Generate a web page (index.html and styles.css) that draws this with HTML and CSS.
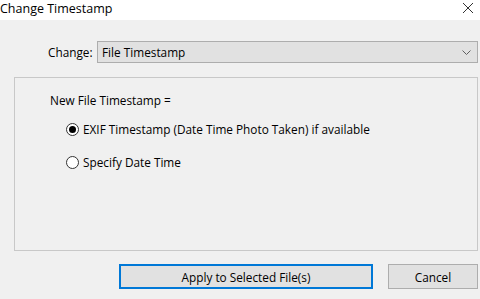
FILE: index.html
```html
<!DOCTYPE html>
<html lang="en">
<head>
    <meta charset="UTF-8">
    <title>Change Timestamp</title>
    <link rel="stylesheet" href="styles.css">
</head>
<body>
    <div class="dialog">
        <div class="title-bar">
            <span class="title">Change Timestamp</span>
            <svg class="close" width="12" height="12" viewBox="0 0 12 12">
                <path d="M1 1 L11 11 M11 1 L1 11" stroke="#333" stroke-width="1" fill="none"/>
            </svg>
        </div>

        <div class="content">
            <div class="change-row">
                <span class="label">Change:</span>
                <div class="combo">
                    <span>File Timestamp</span>
                    <svg class="chevron" width="9" height="5" viewBox="0 0 9 5">
                        <path d="M0.5 0.5 L4.5 4.5 L8.5 0.5" stroke="#606060" stroke-width="1" fill="none"/>
                    </svg>
                </div>
            </div>

            <div class="group">
                <div class="group-title">New File Timestamp =</div>
                <label class="radio-row">
                    <span class="radio checked"></span>
                    <span>EXIF Timestamp (Date Time Photo Taken) if available</span>
                </label>
                <label class="radio-row">
                    <span class="radio"></span>
                    <span>Specify Date Time</span>
                </label>
            </div>

            <div class="buttons">
                <button class="btn btn-default">Apply to Selected File(s)</button>
                <button class="btn btn-cancel">Cancel</button>
            </div>
        </div>
    </div>
</body>
</html>
```

FILE: styles.css
```css
* {
    box-sizing: border-box;
    margin: 0;
    padding: 0;
}

body {
    font-family: "Open Sans", "Noto Sans", sans-serif;
    font-size: 11.8px;
    color: #000;
    background: #f0f0f0;
    width: 480px;
    height: 299px;
    overflow: hidden;
}

.title-bar {
    height: 20px;
    background: #fff;
    display: flex;
    align-items: center;
    justify-content: space-between;
    padding: 0 6px 2px 0;
}

.title {
    font-size: 12.5px;
    line-height: 18px;
}

.close {
    margin-top: -2px;
}

.content {
    padding: 21px 2px 0 14px;
}

.change-row {
    display: flex;
    align-items: center;
    height: 22px;
}

.label {
    width: 83px;
    padding-left: 34px;
}

.combo {
    flex: 1;
    height: 22px;
    background: #e1e1e1;
    border: 1px solid #adadad;
    display: flex;
    align-items: center;
    justify-content: space-between;
    padding: 0 6px 0 4px;
}

.group {
    margin-top: 14px;
    height: 174px;
    border: 1px solid #c8c8c8;
    padding: 13px 0 0 35px;
}

.group-title {
    line-height: 18px;
}

.radio-row {
    display: flex;
    align-items: center;
    gap: 4px;
    margin-left: 16px;
    line-height: 18px;
}

.group-title + .radio-row {
    margin-top: 11px;
}

.radio-row + .radio-row {
    margin-top: 15px;
}

.radio {
    width: 13px;
    height: 13px;
    border: 1px solid #333;
    border-radius: 50%;
    background: #fff;
    display: flex;
    align-items: center;
    justify-content: center;
}

.radio.checked::after {
    content: "";
    width: 7px;
    height: 7px;
    border-radius: 50%;
    background: #000;
}

.buttons {
    display: flex;
    gap: 15px;
    margin-top: 13px;
    padding-left: 105px;
}

.btn {
    font-family: inherit;
    font-size: 11.8px;
    height: 25px;
    background: #e1e1e1;
    border: 1px solid #adadad;
    color: #000;
}

.btn-default {
    width: 254px;
    border: 2px solid #0078d7;
}

.btn-cancel {
    width: 90px;
}
```
